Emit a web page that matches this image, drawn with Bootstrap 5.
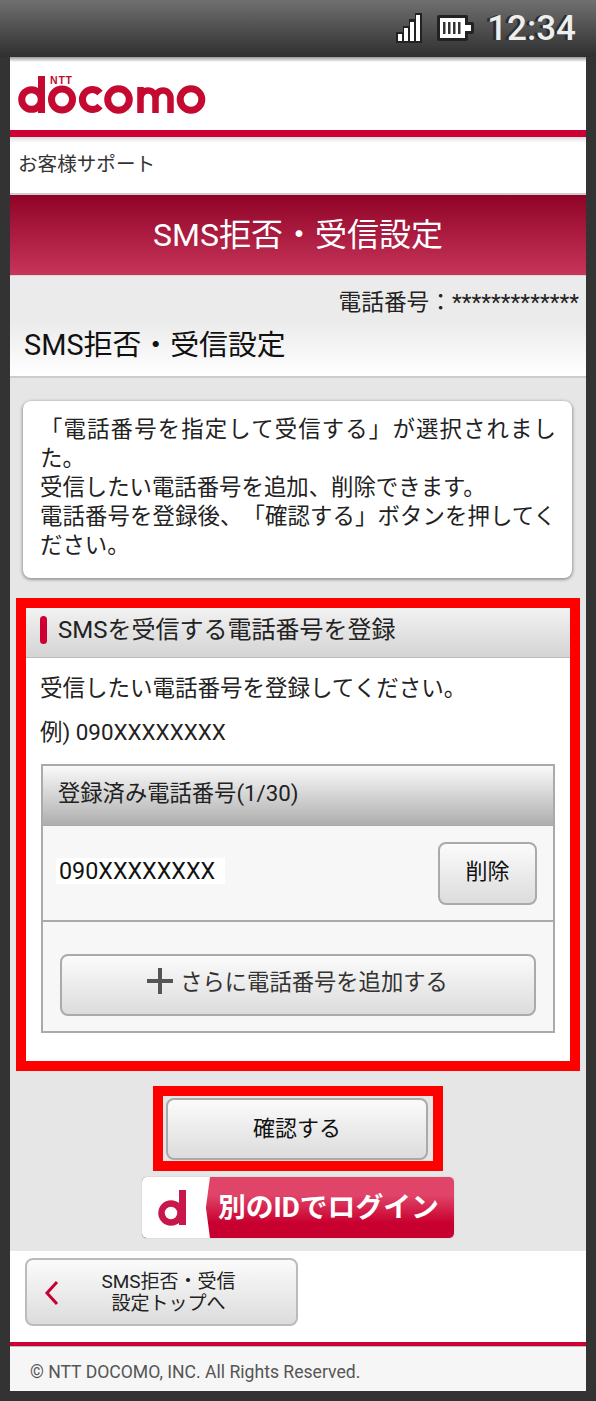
<!doctype html>
<html lang="ja"><head><meta charset="utf-8">
<link href="https://cdn.jsdelivr.net/npm/bootstrap@5.3.0/dist/css/bootstrap.min.css" rel="stylesheet">
<style>
html,body{margin:0;background:#333}
body{font-family:Roboto,"Noto Sans CJK JP",sans-serif;color:#222;width:596px;height:1401px;overflow:hidden;letter-spacing:0;text-spacing-trim:space-all}
.phone{width:596px;height:1401px;background:#333;border-radius:0 0 12px 12px}
.status{height:57px;background:linear-gradient(#707070,#2f2f2f);padding:0 20px 0 0;gap:13px}
.status svg{margin-bottom:2px}
.clock{font-family:Roboto,sans-serif;font-weight:500;font-size:35px;line-height:1;color:#eee;text-shadow:-3px 0 0 #2c2c2c}
.screen{margin:0 10px;width:576px;background:#e6e6e6}
.brand{height:79px;background:linear-gradient(#999 0,#fff 5px);position:relative;padding:15px 0 0 7px}
.brand svg{display:block}
.brandline{height:7px;background:#cc0033;margin-top:-6px;position:relative}
.crumb{height:58px;background:linear-gradient(#ddd 0,#fff 6px,#fff);border-bottom:2px solid #ccc;font-size:19.6px;line-height:56px;padding-left:8px;color:#333}
.pagebar{height:81px;background:linear-gradient(#8f0327 0,#c73559 100%);color:#fff;font-size:32px;line-height:80px;text-align:center;border-bottom:1px solid #d8d8d8}
.userrow{height:45px;background:#ebebeb;text-align:right;padding-right:7px;font-size:22.7px;line-height:53px;color:#222;white-space:nowrap}
.headbar{height:57px;background:linear-gradient(#ebebeb,#fff);border-bottom:2px solid #ccc;font-size:28.900px;line-height:48px;padding-left:14px;color:#111}
.mainarea{padding:23px 0 0;height:873px}
.infobox{margin:0 14px 0 13px;background:#fff;border-radius:8px;padding:14px 16px 11px 17px;box-shadow:0 1px 3px 1px #999;font-size:22.4px;line-height:29px;color:#222;height:177px;text-align:justify}
.hilite{border:10px solid #f00;background:#fff}
.sect{margin:20px 6px 0;height:473px}
.secthead{height:50px;background:linear-gradient(#f2f2f2,#d4d4d4);border-bottom:1px solid #bbb;font-size:24px;line-height:36px;padding:0 0 6px 14px;gap:11px;color:#222}
.pill{width:7px;height:28px;background:#cc0033;border-radius:4px}
.sectbody{padding:14px 15px 0}
.sectbody p{font-size:22.5px;line-height:32px;margin:0 0 12px -1px;color:#222}
.sectbody p.egline{font-size:22.4px}
.tbl{border:2px solid #aaa;height:269px;background:#f7f7f7;margin-top:16px}
.tblhead{height:60px;background:linear-gradient(#fafafa,#aeaeae);border-bottom:1px solid #aaa;font-size:22.3px;line-height:54px;padding-left:15px;color:#222}
.tblrow{height:96px;border-bottom:2px solid #aaa;padding:0 16px 0 13px}
.numtag{background:#fff;font-size:23.3px;line-height:26px;padding:0 10px 0 3px;color:#111;margin-bottom:5px}
.grad{background:linear-gradient(#fbfbfb,#dcdcdc);border:2px solid #aaa;border-radius:8px;color:#111;padding:0;display:flex;align-items:center;justify-content:center}
.grad:hover{background:linear-gradient(#fbfbfb,#dcdcdc);border-color:#aaa;color:#111}
.delbtn{width:99px;height:63px;font-size:22px;padding-bottom:4px}
.addrow{padding:32px 18px 0 17px}
.addbtn{width:476px;height:62px;font-size:22.3px;gap:7px;color:#333;padding-bottom:4px}
.addbtn svg{margin:0 0 4px -1px}
.confirmwrap{width:290px;height:85px;margin:15px auto 0;padding:2px 3px}
.confirmwrap.hilite{background:#e6e6e6}
.confirm{width:262px;height:62px;font-size:22px;padding-bottom:2px}
.dlogin{width:314px;height:63px;margin:5px 0 0 131px;border-radius:6px;border:1px solid #ddd;background:linear-gradient(#e04468 0 30%,#c8002f 75%);overflow:hidden;color:#fff;font-weight:700;font-size:27.800px;white-space:nowrap}
.dtab{width:68px;height:100%;flex:none;background:#fff;clip-path:polygon(0 0,100% 0,94% 50%,100% 100%,0 100%);display:flex;align-items:center;justify-content:center;padding-right:6px}
.backarea{height:91px;background:#fff;padding:7px 0 0 15px}
.backbtn{width:273px;height:68px;font-size:19px;line-height:22px;position:relative;color:#222;border-width:2px;border-color:#bbb;text-align:center}
.backbtn:hover{border-color:#bbb}
.backbtn svg{position:absolute;left:17px;top:20px}
.backtext{padding:2px 0 0 14px}
.foot{height:49px;background:#f6f6f6;border-top:4px solid #cc0033;box-shadow:inset 0 1px 0 #bbb;font-size:17.6px;line-height:53px;padding-left:20px;color:#555;white-space:nowrap}
</style></head><body>
<div class="phone">
 <div class="status d-flex align-items-center justify-content-end">
  <svg width="28" height="30" viewBox="0 0 28 30"><path d="M0 19h7V13h6V6h6V0h7v30H0z" fill="#222"/><path d="M2 21h4v7H2zM8 15h4v13H8zM14 9h4v19h-4zM20 2h4v26h-4z" fill="#fff"/></svg>
  <svg width="37" height="26" viewBox="0 0 37 26"><path d="M2 0h27a2 2 0 0 1 2 2v5h4a2 2 0 0 1 2 2v8a2 2 0 0 1-2 2h-4v5a2 2 0 0 1-2 2H2a2 2 0 0 1-2-2V2a2 2 0 0 1 2-2z" fill="#222"/><path d="M3 3h25v20H3z" fill="#fff"/><path d="M28 10h6v6h-6z" fill="#fff"/><path d="M6 7h2.500v12H6zM11 7h2.500v12H11zM16 7h2.500v12H16zM21 7h2.500v12H21z" fill="#333"/></svg>
  <div class="clock">12:34</div>
 </div>
 <div class="screen">
  <div class="brand">
   <svg width="192" height="44" viewBox="0 0 192 44">
    <g fill="none" stroke="#c40a30" stroke-width="7">
     <circle cx="14.500" cy="27.500" r="9.800"/><circle cx="45" cy="27.500" r="10.500"/>
     <path d="M83 21a10 10 0 1 0 0 13"/>
     <circle cx="101.500" cy="27.500" r="10.800"/>
     <circle cx="174" cy="27.500" r="10.800"/>
     <path stroke-width="6.500" d="M123.500 41V15M123.500 26a7.500 7.500 0 0 1 15 0v15M138.500 26a7.500 7.500 0 0 1 15 0v15"/>
    </g>
    <path d="M21 4h7v37h-7z" fill="#c40a30"/>
    <text x="33" y="11.500" font-family="Liberation Sans,sans-serif" font-weight="700" font-size="10.500" letter-spacing=".8" fill="#c40a30">NTT</text>
   </svg>
  </div>
  <div class="brandline"></div>
  <div class="crumb">お客様サポート</div>
  <div class="pagebar">SMS拒否・受信設定</div>
  <div class="userrow">電話番号：*************</div>
  <div class="headbar">SMS拒否・受信設定</div>
  <div class="mainarea">
   <div class="infobox">「電話番号を指定して受信する」が選択されました。<br>受信したい電話番号を追加、削除できます。<br>電話番号を登録後、「確認する」ボタンを押してください。</div>
   <section class="sect hilite">
    <div class="secthead d-flex align-items-center"><span class="pill"></span><span>SMSを受信する電話番号を登録</span></div>
    <div class="sectbody">
     <p>受信したい電話番号を登録してください。</p>
     <p class="egline">例) 090XXXXXXXX</p>
     <div class="tbl">
      <div class="tblhead">登録済み電話番号(1/30)</div>
      <div class="tblrow d-flex align-items-center justify-content-between"><span class="numtag">090XXXXXXXX</span><button class="btn grad delbtn" type="button">削除</button></div>
      <div class="addrow"><button class="btn grad addbtn" type="button"><svg width="26" height="26" viewBox="0 0 26 26"><path d="M11 0h4v11h11v4H15v11h-4V15H0v-4h11z" fill="#555"/></svg>さらに電話番号を追加する</button></div>
     </div>
    </div>
   </section>
   <div class="confirmwrap hilite d-flex align-items-start justify-content-start"><button class="btn grad confirm" type="button">確認する</button></div>
   <div class="dlogin d-flex align-items-center">
    <span class="dtab"><svg width="30" height="36" viewBox="0 0 30 36"><circle cx="13" cy="23" r="9.500" fill="none" stroke="#c8174a" stroke-width="6.500"/><path d="M21 0h7v35h-7z" fill="#c8174a"/></svg></span>
    <span class="ms-2">別のIDでログイン</span>
   </div>
  </div>
  <div class="backarea"><a class="btn grad backbtn" href="#"><svg width="15" height="26" viewBox="0 0 15 26"><path d="M13 2 3 13l10 11" fill="none" stroke="#c8002f" stroke-width="3"/></svg><span class="backtext">SMS拒否・受信<br>設定トップへ</span></a></div>
  <div class="foot">© NTT DOCOMO, INC. All Rights Reserved.</div>
 </div>
</div>
<script src="https://cdn.jsdelivr.net/npm/bootstrap@5.3.0/dist/js/bootstrap.bundle.min.js"></script>
</body></html>
